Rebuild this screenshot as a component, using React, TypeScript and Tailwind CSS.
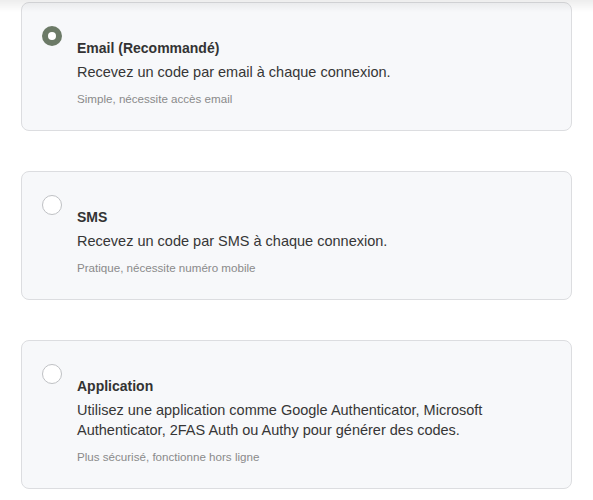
import React, { useState } from 'react';

interface Method {
  id: string;
  title: string;
  description: string;
  note: string;
}

const methods: Method[] = [
  {
    id: 'email',
    title: 'Email (Recommandé)',
    description: 'Recevez un code par email à chaque connexion.',
    note: 'Simple, nécessite accès email',
  },
  {
    id: 'sms',
    title: 'SMS',
    description: 'Recevez un code par SMS à chaque connexion.',
    note: 'Pratique, nécessite numéro mobile',
  },
  {
    id: 'app',
    title: 'Application',
    description:
      'Utilisez une application comme Google Authenticator, Microsoft Authenticator, 2FAS Auth ou Authy pour générer des codes.',
    note: 'Plus sécurisé, fonctionne hors ligne',
  },
];

const Radio: React.FC<{ checked: boolean }> = ({ checked }) =>
  checked ? (
    <span className="flex h-5 w-5 shrink-0 items-center justify-center rounded-full bg-[#6c7a67]">
      <span className="h-2 w-2 rounded-full bg-white" />
    </span>
  ) : (
    <span className="h-5 w-5 shrink-0 rounded-full border border-[#bfc1c4] bg-white" />
  );

const App: React.FC = () => {
  const [selected, setSelected] = useState('email');

  return (
    <div
      className="relative min-h-[500px] bg-white px-[21px] pt-[2px]"
      style={{ fontFamily: '"Liberation Sans", Arial, sans-serif' }}
    >
      {/* shadow from the header above */}
      <div className="pointer-events-none absolute inset-x-0 top-0 h-3 bg-gradient-to-b from-[#00000012] to-transparent" />
      <div className="flex flex-col gap-10">
        {methods.map(method => (
          <label
            key={method.id}
            onClick={() => setSelected(method.id)}
            className="flex cursor-pointer gap-[15px] rounded-lg border border-[#dcdde0] bg-[#f7f8fa] px-5 pt-[23px] pb-[23px]"
          >
            <Radio checked={selected === method.id} />
            <div className="pt-[12px]">
              <div className="text-[14px] font-bold leading-5 text-[#333333]">{method.title}</div>
              <div className="mt-[4px] text-[14.5px] leading-5 text-[#363636]">{method.description}</div>
              <div className="mt-[9px] text-[11.6px] leading-4 text-[#8a8a8a]">{method.note}</div>
            </div>
          </label>
        ))}
      </div>
    </div>
  );
};

export default App;
